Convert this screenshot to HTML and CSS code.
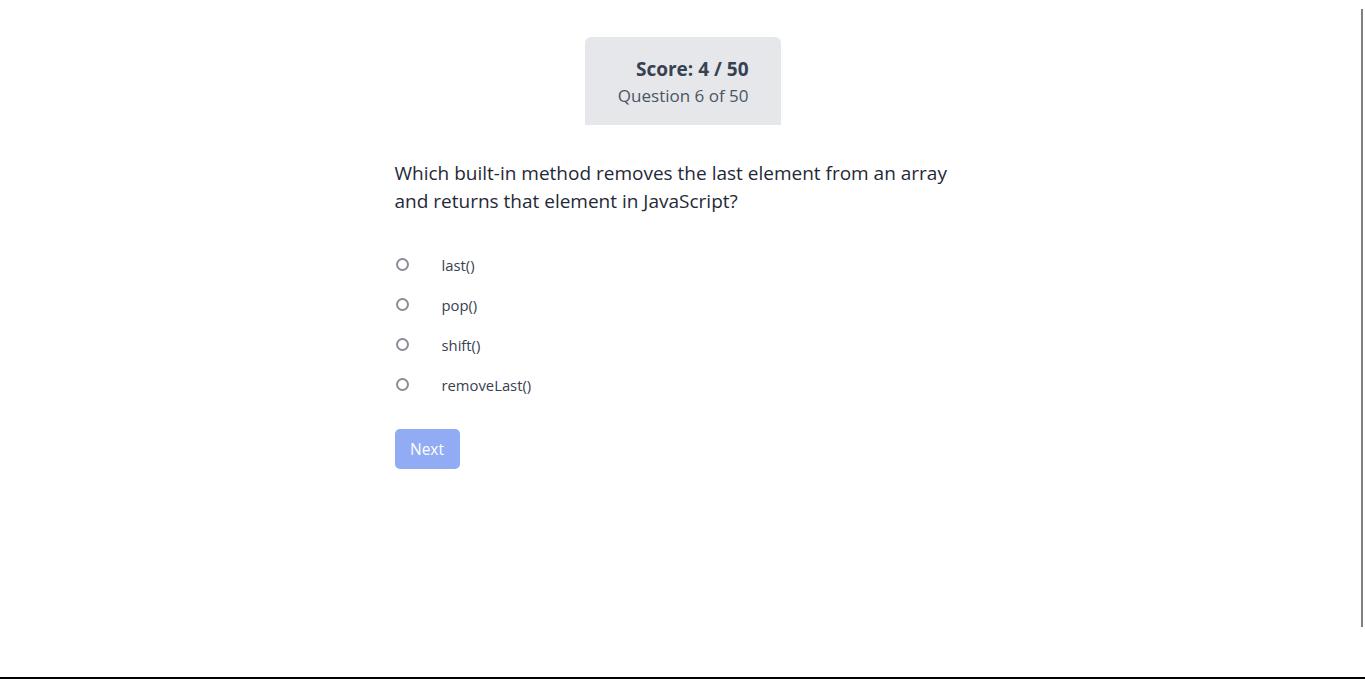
FILE: index.html
```html
<!DOCTYPE html>
<html lang="en">
<head>
<meta charset="utf-8">
<title>Quiz</title>
<link rel="stylesheet" href="styles.css">
</head>
<body>
<div class="page">
  <main class="quiz">
    <div class="score-wrap">
      <div class="score-box">
        <div class="score">Score: 4 / 50</div>
        <div class="progress">Question 6 of 50</div>
      </div>
    </div>
    <h2 class="question">Which built-in method removes the last element from an array and returns that element in JavaScript?</h2>
    <ul class="options">
      <li class="option"><span class="radio"></span><span class="label">last()</span></li>
      <li class="option"><span class="radio"></span><span class="label">pop()</span></li>
      <li class="option"><span class="radio"></span><span class="label">shift()</span></li>
      <li class="option"><span class="radio"></span><span class="label">removeLast()</span></li>
    </ul>
    <button class="next" type="button">Next</button>
  </main>
  <div class="scroll-thumb"></div>
</div>
</body>
</html>
```
FILE: styles.css
```css
* { box-sizing: border-box; }
html, body { margin: 0; padding: 0; }
body {
  font-family: "Open Sans", "Noto Sans", sans-serif;
  background: #fff;
  color: #1f2937;
}
.page {
  position: relative;
  height: 679px;
  border-bottom: 2px solid #000;
  overflow: hidden;
}
.quiz {
  max-width: 576px;
  margin: 0 auto;
  padding-top: 37px;
}
.score-wrap {
  display: flex;
  justify-content: center;
}
.score-box {
  background: #e5e7eb;
  border-radius: 6px 6px 0 0;
  padding: 18px 32px 18px 32px;
  text-align: right;
  width: 196px;
  height: 88px;
}
.score {
  font-size: 19px;
  font-weight: 700;
  line-height: 28px;
  color: #374151;
}
.progress {
  font-size: 17px;
  line-height: 24px;
  margin-top: 1px;
  color: #4b5563;
}
.question {
  margin: 34px 0 0;
  font-size: 19px;
  font-weight: 400;
  line-height: 28px;
  color: #1f2937;
}
.options {
  list-style: none;
  margin: 38px 0 0;
  padding: 0;
  display: flex;
  flex-direction: column;
  gap: 16px;
}
.option {
  display: flex;
  align-items: center;
  height: 24px;
}
.radio {
  width: 13px;
  height: 13px;
  border: 2px solid #8a8d96;
  border-radius: 50%;
  margin-left: 1px;
  margin-top: -2px;
  flex: none;
}
.label {
  margin-left: 33px;
  font-size: 14.8px;
  color: #374151;
}
.next {
  margin-top: 32px;
  width: 65px;
  height: 40px;
  border: none;
  border-radius: 5px;
  background: #91abf4;
  color: #fff;
  font-family: inherit;
  font-size: 15.5px;
  padding: 0;
}
.scroll-thumb {
  position: absolute;
  left: 1361px;
  top: 9px;
  width: 2px;
  height: 618px;
  background: #808080;
}
```
